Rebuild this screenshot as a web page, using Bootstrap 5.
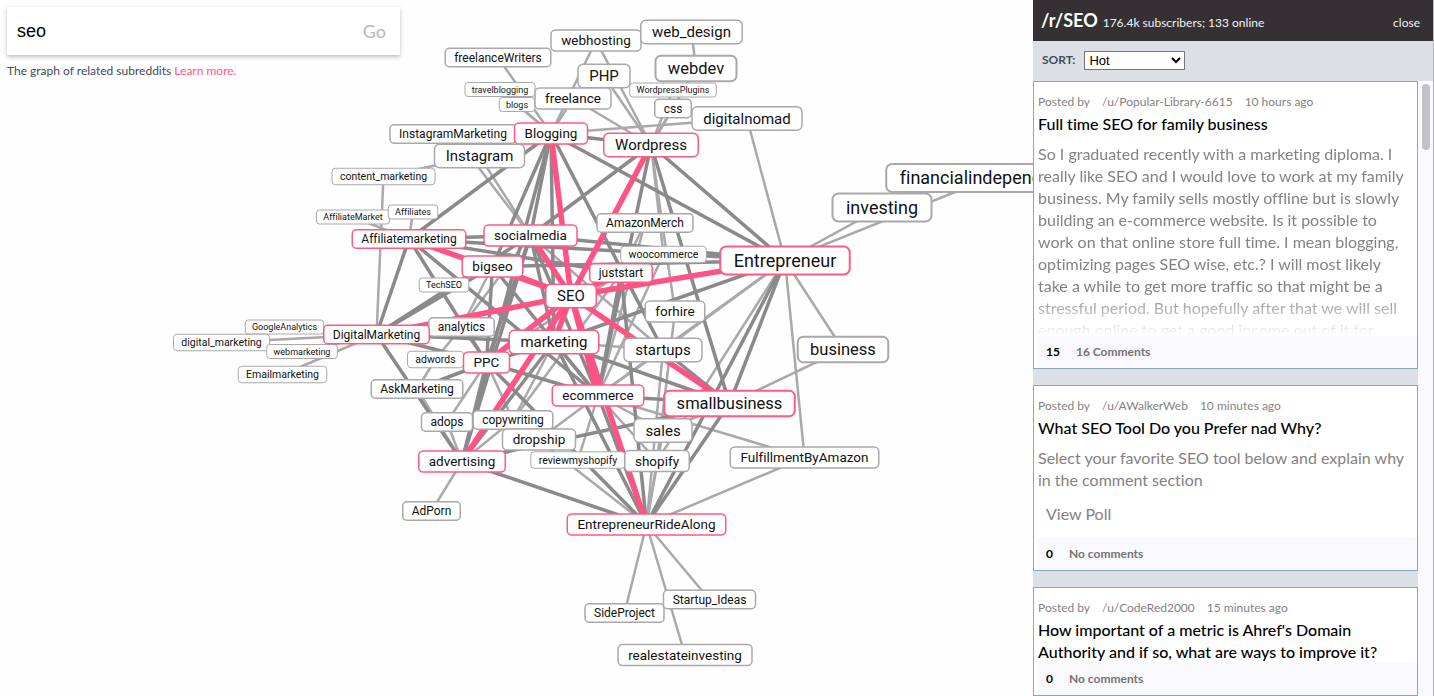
<!DOCTYPE html>
<html lang="en">
<head>
<meta charset="utf-8">
<meta name="viewport" content="width=device-width, initial-scale=1">
<title>Map of related subreddits</title>
<link href="https://cdn.jsdelivr.net/npm/bootstrap@5.3.0/dist/css/bootstrap.min.css" rel="stylesheet">
<style>
  body { font-family: Lato, "Open Sans", sans-serif; font-variant-ligatures: none; background: #fefefe; color: #434b5c; }
  .pink { color: #ff5a84; }
  .graph-pane { min-width: 0; }
  .graph-pane svg { display: block; width: 100%; height: 100%; }
  .graph-pane text { font-family: Roboto, sans-serif; fill: #111; text-anchor: middle; }
  .graph-pane rect { fill: #fff; stroke: #aaa8aa; }
  .graph-pane .hit rect { stroke: #ff5a84; }
  .graph-pane line { stroke: #aaa8aa; stroke-width: 5; }
  .graph-pane line.strong { stroke: #8c898b; stroke-width: 7; }
  .graph-pane line.main { stroke: #ff5384; stroke-width: 11; }
  .search-area { position: absolute; top: 0; left: 0; width: 400px; padding: 7px 0 0 7px; }
  .search-box { height: 48px; background: #fff; box-shadow: 0 2px 4px rgba(0, 0, 0, .25); }
  .search-box input { font: 18px "Liberation Sans", sans-serif; color: #000; padding: 0 10px; min-width: 0; outline: 0; }
  .search-box button { font-size: 18px; color: #b9b7b9; padding: 0 14px; }
  .search-note { font-size: 12px; line-height: 18px; margin-top: 7px; }
  .reader { width: 401px; background: #dcdfe6; border-right: 1px solid #b5b3b7; }
  .reader-head { height: 41px; gap: 5px; background: #343033; color: #fff; padding: 0 13px 0 8px; }
  .reader-head h1 { font-size: 18px; line-height: 40px; font-weight: 700; }
  .reader-head .stats, .reader-head button { font-size: 12px; color: #f4f2f4; }
  .sort-bar { height: 40px; gap: 9px; padding: 0 0 2px 9px; font-size: 12px; color: #434b5c; }
  .sort-bar select { width: 101px; height: 19px; font: 13px "Liberation Sans", sans-serif; color: #000; background: #fff; border: 1px solid #767676; }
  .post-list { min-width: 0; gap: 16px; }
  .post { flex: none; background: #fff; border: 1px solid #8fa4b8; }
  .post-meta { padding: 10px 4px 1px; font-size: 12px; line-height: 20px; gap: 12px; color: #858184; }
  .post h2 { margin: 0; padding: 0 4px; font-size: 16px; line-height: 22px; font-weight: 500; color: #000; }
  .post-text { margin-top: 8px; padding: 0 0 0 4px; max-height: 193px; font-size: 16px; line-height: 22px; color: #858184; }
  .faded { -webkit-mask-image: linear-gradient(#000 150px, transparent 193px); mask-image: linear-gradient(#000 150px, transparent 193px); }
  .poll-link { display: inline-block; color: #858184; margin: 12px 0 13px 8px; }
  .post-foot { height: 32px; margin-left: 4px; padding-left: 8px; gap: 16px; background: #f9f9fd; font-size: 12px; font-weight: 700; color: #777376; }
  .post-foot .score { color: #000; }
  .scroll-track { width: 15px; background: #faf9fd; padding: 3px 3px 0 4px; }
  .scroll-thumb { height: 66px; border-radius: 4px; background: #c3c3c7; }
</style>
</head>
<body>
<div class="d-flex vh-100 overflow-hidden position-relative">
  <main class="graph-pane flex-grow-1 overflow-hidden">
    <svg id="graph" viewBox="0 0 2066 1392" preserveAspectRatio="xMinYMin slice" role="img" aria-label="Graph of subreddits related to SEO"></svg>
  </main>

  <div class="search-area">
    <form class="search-box d-flex align-items-center" onsubmit="return false">
      <input class="flex-grow-1 h-100 border-0 bg-transparent" type="text" value="seo" aria-label="Subreddit">
      <button class="border-0 bg-transparent h-100" type="submit">Go</button>
    </form>
    <div class="search-note">The graph of related subreddits <a href="#" class="pink text-decoration-none">Learn more.</a></div>
  </div>

  <aside class="reader d-flex flex-column flex-shrink-0">
    <header class="reader-head d-flex align-items-baseline flex-shrink-0">
      <h1 class="m-0">/r/SEO</h1>
      <span class="stats">176.4k subscribers; 133 online</span>
      <button class="ms-auto border-0 bg-transparent p-0" type="button">close</button>
    </header>
    <div class="sort-bar d-flex align-items-center flex-shrink-0">
      <label for="sort" class="fw-bold">SORT:</label>
      <select id="sort"><option>Hot</option><option>New</option><option>Top</option></select>
    </div>
    <div class="d-flex flex-grow-1 overflow-hidden">
      <div class="post-list d-flex flex-column flex-grow-1 overflow-hidden">
        <article class="post">
          <div class="post-meta d-flex"><span>Posted by</span><span>/u/Popular-Library-6615</span><span>10 hours ago</span></div>
          <h2>Full time SEO for family business</h2>
          <div class="post-text faded overflow-hidden">So I graduated recently with a marketing diploma. I<br>really like SEO and I would love to work at my family<br>business. My family sells mostly offline but is slowly<br>building an e-commerce website. Is it possible to<br>work on that online store full time. I mean blogging,<br>optimizing pages SEO wise, etc.? I will most likely<br>take a while to get more traffic so that might be a<br>stressful period. But hopefully after that we will sell<br>enough online to get a good income out of it for</div>
          <div class="post-foot d-flex align-items-center"><span class="score">15</span><span>16 Comments</span></div>
        </article>
        <article class="post">
          <div class="post-meta d-flex"><span>Posted by</span><span>/u/AWalkerWeb</span><span>10 minutes ago</span></div>
          <h2>What SEO Tool Do you Prefer nad Why?</h2>
          <div class="post-text">Select your favorite SEO tool below and explain why<br>in the comment section<br><a href="#" class="poll-link text-decoration-none">View Poll</a></div>
          <div class="post-foot d-flex align-items-center"><span class="score">0</span><span>No comments</span></div>
        </article>
        <article class="post">
          <div class="post-meta d-flex"><span>Posted by</span><span>/u/CodeRed2000</span><span>15 minutes ago</span></div>
          <h2>How important of a metric is Ahref's Domain<br>Authority and if so, what are ways to improve it?</h2>
          <div class="post-foot d-flex align-items-center"><span class="score">0</span><span>No comments</span></div>
        </article>
      </div>
      <div class="scroll-track flex-shrink-0"><div class="scroll-thumb"></div></div>
    </div>
  </aside>
</div>
<script src="https://cdn.jsdelivr.net/npm/bootstrap@5.3.0/dist/js/bootstrap.bundle.min.js"></script>
<script>
// Every node: name, centre x, centre y, text size; a trailing 1 marks a direct neighbour of r/SEO.
const nodes = [
  ['webhosting',1192,81,27],['web_design',1383,64,30],['webdev',1392,137,33],['PHP',1208,152,30],
  ['freelanceWriters',996,115,24],['travelblogging',1000,179,18],['blogs',1034,209,18],
  ['freelance',1146,197,27],['WordpressPlugins',1346,180,18],['css',1346,217,24],['digitalnomad',1494,237,30],
  ['InstagramMarketing',906,268,24],['Blogging',1102,267,27,1],['Wordpress',1302,290,30,1],
  ['Instagram',959,312,30],['content_marketing',767,353,21],['AffiliateMarket',706,434,18],
  ['Affiliates',826,424,18],['Affiliatemarketing',818,478,24,1],['socialmedia',1061,471,27,1],
  ['AmazonMerch',1290,446,24],['woocommerce',1327,509,21],['bigseo',985,533,27,1],
  ['juststart',1242,546,24,1],['TechSEO',888,570,18],
  ['Entrepreneur',1570,521,36,1],['financialindependence',1980,356,36],['investing',1764,415,36],
  ['business',1686,699,33],['forhire',1350,623,27],['GoogleAnalytics',569,654,18],
  ['analytics',923,654,24],['digital_marketing',443,685,21],['webmarketing',604,703,18],
  ['DigitalMarketing',753,669,24,1],['Emailmarketing',565,749,21],
  ['adwords',871,719,21],['PPC',973,725,27,1],['marketing',1108,684,30,1],['SEO',1142,592,30,1],
  ['startups',1326,700,30],['AskMarketing',834,778,24],['ecommerce',1196,791,27,1],
  ['smallbusiness',1459,807,33,1],['adops',894,844,24],['copywriting',1026,840,24],
  ['sales',1326,861,30],['dropship',1078,879,27],['advertising',924,923,27,1],
  ['reviewmyshopify',1156,920,21],['shopify',1314,922,27],['FulfillmentByAmazon',1609,915,27],
  ['AdPorn',863,1022,24],['EntrepreneurRideAlong',1293,1049,27,1],['SideProject',1249,1226,24],
  ['Startup_Ideas',1419,1199,24],['realestateinvesting',1370,1310,27]
];
// Links grouped by strength, "source: targets".
const weak = `
web_design: webdev; webdev: Wordpress; css: Wordpress; WordpressPlugins: Wordpress; PHP: Wordpress
webhosting: Wordpress Blogging; freelance: Wordpress Blogging; freelanceWriters: Blogging
travelblogging: Blogging; blogs: Blogging; digitalnomad: Blogging Entrepreneur
InstagramMarketing: Blogging Instagram socialmedia; Instagram: socialmedia content_marketing
content_marketing: DigitalMarketing; AffiliateMarket: Affiliatemarketing; Affiliates: Affiliatemarketing
woocommerce: Wordpress ecommerce; AmazonMerch: juststart ecommerce; forhire: Wordpress shopify
TechSEO: bigseo; analytics: socialmedia bigseo adwords PPC; adwords: AskMarketing PPC
DigitalMarketing: GoogleAnalytics digital_marketing webmarketing Emailmarketing
Entrepreneur: investing financialindependence business FulfillmentByAmazon shopify ecommerce startups
business: smallbusiness; FulfillmentByAmazon: ecommerce EntrepreneurRideAlong
startups: marketing EntrepreneurRideAlong ecommerce socialmedia; sales: ecommerce EntrepreneurRideAlong smallbusiness
shopify: ecommerce EntrepreneurRideAlong; dropship: ecommerce; reviewmyshopify: ecommerce
juststart: PPC copywriting; copywriting: PPC advertising EntrepreneurRideAlong marketing
adops: advertising PPC; AskMarketing: advertising; AdPorn: advertising
EntrepreneurRideAlong: SideProject Startup_Ideas realestateinvesting`;
const strong = `
Blogging: Wordpress Entrepreneur Affiliatemarketing socialmedia bigseo marketing startups advertising
Wordpress: Entrepreneur socialmedia smallbusiness ecommerce
Affiliatemarketing: socialmedia Entrepreneur juststart DigitalMarketing ecommerce PPC
socialmedia: Entrepreneur DigitalMarketing PPC advertising marketing ecommerce
bigseo: Entrepreneur DigitalMarketing PPC ecommerce
marketing: Entrepreneur DigitalMarketing advertising PPC EntrepreneurRideAlong smallbusiness ecommerce
Entrepreneur: smallbusiness EntrepreneurRideAlong; startups: smallbusiness
smallbusiness: EntrepreneurRideAlong ecommerce advertising
advertising: EntrepreneurRideAlong DigitalMarketing PPC
PPC: ecommerce DigitalMarketing AskMarketing EntrepreneurRideAlong
juststart: ecommerce EntrepreneurRideAlong; ecommerce: EntrepreneurRideAlong`;
const main = `SEO: Blogging Wordpress socialmedia bigseo Affiliatemarketing juststart Entrepreneur DigitalMarketing marketing PPC advertising ecommerce EntrepreneurRideAlong smallbusiness`;

const svg = document.getElementById('graph');
const at = Object.fromEntries(nodes.map(n => [n[0], n]));
function add(parent, tag, attrs) {
  const el = document.createElementNS('http://www.w3.org/2000/svg', tag);
  for (const k in attrs) el.setAttribute(k, attrs[k]);
  return parent.appendChild(el);
}
function links(list, cls) {
  list.trim().split(/[;\n]/).forEach(row => {
    const [from, targets] = row.trim().split(': ');
    targets.split(' ').forEach(to => add(svg, 'line', { x1: at[from][1], y1: at[from][2], x2: at[to][1], y2: at[to][2], class: cls }));
  });
}
links(weak, 'weak');
links(strong, 'strong');
links(main, 'main');
nodes.forEach(([name, x, y, size, hit]) => {
  const g = add(svg, 'g', { class: hit ? 'hit' : 'far' });
  const box = add(g, 'rect', {});
  const label = add(g, 'text', { x: x, y: y + Math.round(size * .32), 'font-size': size });
  label.textContent = name;
  const w = Math.round(label.getComputedTextLength() + size * 1.5), h = Math.round(size * 1.56);
  const attrs = { x: x - w / 2, y: y - h / 2, width: w, height: h, rx: Math.round(size / 3), 'stroke-width': Math.max(2, Math.round(size / 9)) };
  for (const k in attrs) box.setAttribute(k, attrs[k]);
});
</script>
</body>
</html>
